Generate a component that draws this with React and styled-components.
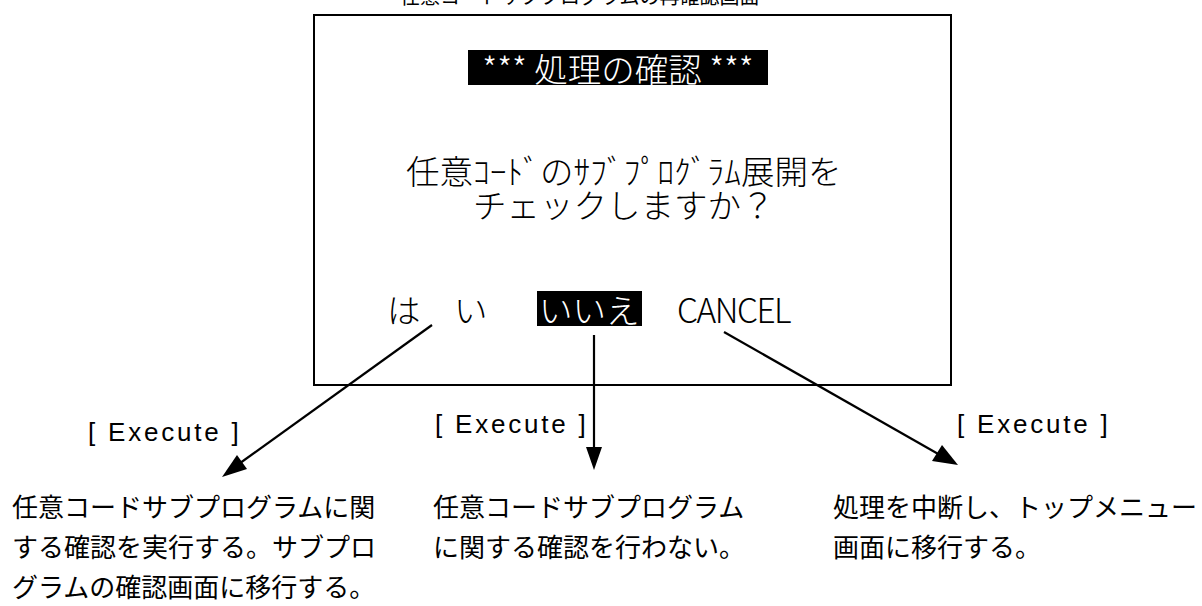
import React from 'react';
import styled, { createGlobalStyle } from 'styled-components';

const GlobalStyle = createGlobalStyle`
  body {
    margin: 0;
    background: #fff;
    font-family: 'Noto Sans CJK JP', sans-serif;
    color: #000;
  }
`;

const Page = styled.div`
  position: relative;
  width: 1202px;
  height: 606px;
  overflow: hidden;
  background: #fff;
  display: flex;
  flex-direction: column;
`;

/* caption above the frame, only its bottom edge is inside the shot */
const ScreenTitle = styled.div`
  margin: -14px 0 0 400px;
  height: 20px;
  font-size: 20px;
  line-height: 20px;
  white-space: nowrap;
  font-family: 'Noto Sans CJK JP', sans-serif;
`;

const Dialog = styled.div`
  margin: 8px 0 0 313px;
  width: 639px;
  height: 381px;
  box-sizing: border-box;
  border: 2px solid #000;
  display: flex;
  flex-direction: column;
  align-items: flex-start;
  font-family: 'Noto Sans CJK JP', sans-serif;
  font-weight: 300;
  font-size: 33.5px;
`;

const TitleBar = styled.div`
  margin: 34px 0 0 153px;
  width: 300px;
  height: 35px;
  background: #000;
  color: #fff;
  display: flex;
  align-items: center;
  justify-content: center;
  line-height: 1;
  white-space: pre;
`;

const Message = styled.div`
  margin: 68px 0 0 91px;
  line-height: 33.5px;
  white-space: pre;
`;

const Choices = styled.div`
  margin: 71px 0 0 72px;
  display: flex;
  align-items: center;
  height: 35px;
`;

const Choice = styled.span`
  display: inline-flex;
  align-items: center;
  height: 35px;
  line-height: 1;
  white-space: pre;
  letter-spacing: ${(p) => p.$tight ? '-1.5px' : '0'};
  margin-left: ${(p) => p.$gap || 0}px;
  padding: 0 ${(p) => (p.$selected ? 2 : 0)}px;
  background: ${(p) => (p.$selected ? '#000' : 'transparent')};
  color: ${(p) => (p.$selected ? '#fff' : '#000')};
`;

const Notes = styled.div`
  display: grid;
  grid-template-columns: 421px 400px 1fr;
  grid-template-rows: 100px auto;
  padding-left: 12px;
`;

const Label = styled.div`
  padding-top: ${(p) => p.$top}px;
  padding-left: ${(p) => p.$indent}px;
  font-family: 'Liberation Sans', Arial, sans-serif;
  font-size: 26px;
  line-height: 30px;
  letter-spacing: 2.8px;
  white-space: pre;
`;

const Description = styled.div`
  font-family: 'Noto Sans CJK JP', sans-serif;
  font-size: 26px;
  line-height: 40px;
  white-space: nowrap;
`;

const Arrows = styled.svg`
  position: absolute;
  left: 0;
  top: 0;
  pointer-events: none;
`;

const arrows = [
  { line: [432, 325, 236, 466], head: '222,477 247,469 237,455' },
  { line: [594, 335, 594, 452], head: '594,470 586,447 602,447' },
  { line: [724, 332, 940, 455], head: '958,465 932,461 942,445' },
];

const notes = [
  {
    top: 31,
    indent: 76,
    text: ['任意コードサブプログラムに関', 'する確認を実行する。サブプロ', 'グラムの確認画面に移行する。'],
  },
  {
    top: 23,
    indent: 2,
    text: ['任意コードサブプログラム', 'に関する確認を行わない。'],
  },
  {
    top: 23,
    indent: 124,
    text: ['処理を中断し、トップメニュー', '画面に移行する。'],
  },
];

const App = () => {
  return (
    <>
      <GlobalStyle />
      <Page>
        <ScreenTitle>任意コードサブプログラムの再確認画面</ScreenTitle>
        <Dialog>
          <TitleBar>{'*** 処理の確認 ***'}</TitleBar>
          <Message>
            {'任意ｺｰﾄﾞのｻﾌﾞﾌﾟﾛｸﾞﾗﾑ展開を\n　　チェックしますか？'}
          </Message>
          <Choices>
            <Choice>{'は　い'}</Choice>
            <Choice $gap={49.5} $selected>いいえ</Choice>
            <Choice $gap={35.5} $tight>CANCEL</Choice>
          </Choices>
        </Dialog>
        <Notes>
          {notes.map((n, i) => (
            <Label key={'l' + i} $top={n.top} $indent={n.indent} style={{ gridRow: 1, gridColumn: i + 1 }}>
              {'[ Execute ]'}
            </Label>
          ))}
          {notes.map((n, i) => (
            <Description key={'d' + i} style={{ gridRow: 2, gridColumn: i + 1 }}>
              {n.text.map((t) => (
                <div key={t}>{t}</div>
              ))}
            </Description>
          ))}
        </Notes>
        <Arrows width="1202" height="606" viewBox="0 0 1202 606">
          {arrows.map((a, i) => (
            <g key={i}>
              <line x1={a.line[0]} y1={a.line[1]} x2={a.line[2]} y2={a.line[3]} stroke="#000" strokeWidth="2.2" />
              <polygon points={a.head} fill="#000" />
            </g>
          ))}
        </Arrows>
      </Page>
    </>
  );
};

export default App;
